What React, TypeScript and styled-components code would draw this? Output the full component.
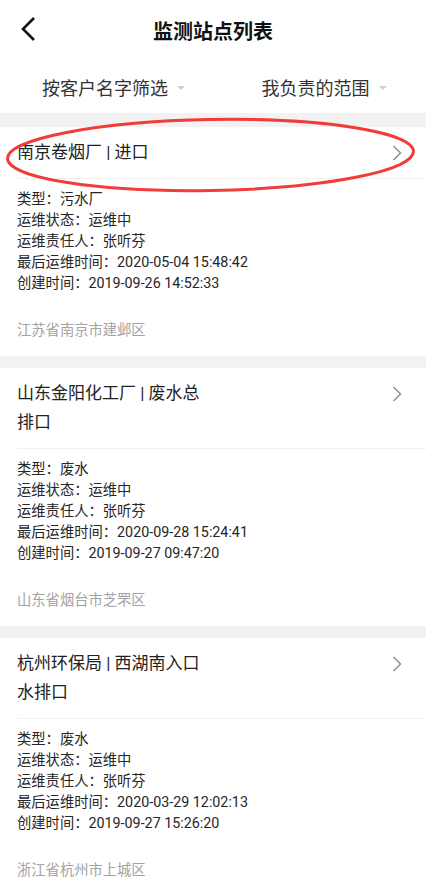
import { createGlobalStyle, styled } from "styled-components";

const GlobalStyle = createGlobalStyle`
	html, body {
		margin: 0;
		padding: 0;
		background: #f2f2f2;
	}
	body {
		font-family: Roboto, "Noto Sans CJK SC", sans-serif;
		color: #222;
		-webkit-font-smoothing: antialiased;
	}
`;

const Page = styled.div`
	position: relative;
	width: 426px;
	min-height: 882px;
	background: #f2f2f2;
`;

const Header = styled.div`
	height: 60px;
	display: flex;
	align-items: center;
	justify-content: center;
	position: relative;
	background: #fff;
`;

const BackButton = styled.div`
	position: absolute;
	left: 18px;
	top: 15px;
	width: 20px;
	height: 28px;
	display: flex;
	align-items: center;
	justify-content: center;
`;

const Title = styled.h1`
	margin: 0;
	font-size: 20px;
	font-weight: 700;
	color: #111;
	letter-spacing: 0;
`;

const FilterBar = styled.div`
	height: 53px;
	display: flex;
	background: #fff;
	margin-bottom: 14px;
`;

const FilterItem = styled.div<{ $offset: number }>`
	flex: 1;
	display: flex;
	align-items: center;
	padding-left: ${({ $offset }) => $offset}px;
	gap: 9px;
	font-size: 18px;
	color: #333;
`;

const Caret = styled.span`
	width: 0;
	height: 0;
	border-left: 4px solid transparent;
	border-right: 4px solid transparent;
	border-top: 4px solid #cfcfcf;
	margin-top: 2px;
`;

const List = styled.div`
	display: flex;
	flex-direction: column;
	gap: 12px;
`;

const Card = styled.div`
	background: #fff;
	padding-left: 17px;
`;

const CardHead = styled.div`
	display: flex;
	justify-content: space-between;
	align-items: flex-start;
	padding: 11px 24px 11px 0;
	border-bottom: 1px solid #f0f0f0;
`;

const CardTitle = styled.div`
	width: 186px;
	font-size: 17px;
	line-height: 29px;
	color: #222;
`;

const Chevron = styled.div`
	height: 29px;
	display: flex;
	align-items: center;
`;

const CardBody = styled.div`
	padding: 10px 0 15px;
`;

const InfoLine = styled.div`
	font-size: 14.3px;
	line-height: 21px;
	color: #262626;
`;

const Address = styled.div`
	margin-top: 26px;
	font-size: 14.3px;
	line-height: 21px;
	color: #a3a3a3;
`;

const Annotation = styled.svg`
	position: absolute;
	left: 0;
	top: 112px;
	pointer-events: none;
`;

type Station = {
	name: string;
	type: string;
	status: string;
	owner: string;
	lastTime: string;
	created: string;
	address: string;
};

const stations: Station[] = [
	{
		name: "南京卷烟厂 | 进口",
		type: "污水厂",
		status: "运维中",
		owner: "张听芬",
		lastTime: "2020-05-04 15:48:42",
		created: "2019-09-26 14:52:33",
		address: "江苏省南京市建邺区",
	},
	{
		name: "山东金阳化工厂 | 废水总排口",
		type: "废水",
		status: "运维中",
		owner: "张听芬",
		lastTime: "2020-09-28 15:24:41",
		created: "2019-09-27 09:47:20",
		address: "山东省烟台市芝罘区",
	},
	{
		name: "杭州环保局 | 西湖南入口水排口",
		type: "废水",
		status: "运维中",
		owner: "张听芬",
		lastTime: "2020-03-29 12:02:13",
		created: "2019-09-27 15:26:20",
		address: "浙江省杭州市上城区",
	},
];

function StationCard({ s }: { s: Station }) {
	return (
		<Card>
			<CardHead>
				<CardTitle>{s.name}</CardTitle>
				<Chevron>
					<svg width="10" height="16" viewBox="0 0 10 16">
						<path d="M1.5 1 L8.5 8 L1.5 15" fill="none" stroke="#8a8a8a" strokeWidth="1.4" />
					</svg>
				</Chevron>
			</CardHead>
			<CardBody>
				<InfoLine>类型：{s.type}</InfoLine>
				<InfoLine>运维状态：{s.status}</InfoLine>
				<InfoLine>运维责任人：{s.owner}</InfoLine>
				<InfoLine>最后运维时间：{s.lastTime}</InfoLine>
				<InfoLine>创建时间：{s.created}</InfoLine>
				<Address>{s.address}</Address>
			</CardBody>
		</Card>
	);
}

export default function App() {
	return (
		<>
			<GlobalStyle />
			<Page>
				<Header>
					<BackButton>
						<svg width="16" height="26" viewBox="0 0 16 26">
							<path d="M14 2 L3 13 L14 24" fill="none" stroke="#111" strokeWidth="2.6" />
						</svg>
					</BackButton>
					<Title>监测站点列表</Title>
				</Header>
				<FilterBar>
					<FilterItem $offset={42}>
						按客户名字筛选
						<Caret />
					</FilterItem>
					<FilterItem $offset={55}>
						我负责的范围
						<Caret />
					</FilterItem>
				</FilterBar>
				<List>
					{stations.map((s) => (
						<StationCard key={s.name} s={s} />
					))}
				</List>
				<Annotation width="426" height="90" viewBox="0 0 426 90">
					<ellipse
						cx="210.5"
						cy="43"
						rx="203"
						ry="35.5"
						fill="none"
						stroke="#f23b3b"
						strokeWidth="3"
						transform="rotate(-1 210.5 43)"
					/>
				</Annotation>
			</Page>
		</>
	);
}
